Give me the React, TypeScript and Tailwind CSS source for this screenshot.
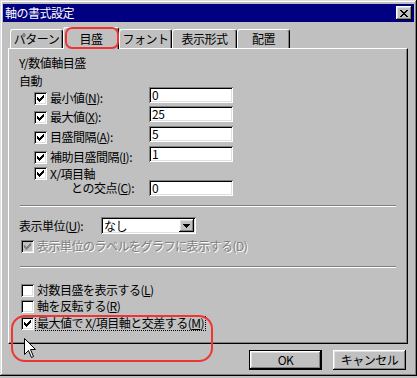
import type {ReactNode} from 'react';

const raised =
    'shadow-[inset_-1px_-1px_0_#000,inset_1px_1px_0_#fff,inset_-2px_-2px_0_#808080,inset_2px_2px_0_#dfdfdf]';
const sunken =
    'shadow-[inset_1px_1px_0_#808080,inset_-1px_-1px_0_#fff,inset_2px_2px_0_#000,inset_-2px_-2px_0_#dfdfdf]';

const CheckBox = ({checked = false, disabled = false}: {checked?: boolean; disabled?: boolean}) => (
    <span
        className={`relative flex h-[13px] w-[13px] shrink-0 items-center justify-center ${sunken} ${
            disabled ? 'bg-[#c0c0c0]' : 'bg-white'
        }`}
    >
        {checked && (
            <svg width="7" height="7" viewBox="0 0 7 7" className="block">
                <path
                    d="M0 2h1v1h1v1h1V3h1V2h1V1h1V0h1v3H6v1H5v1H4v1H3v1H2V6H1V5H0z"
                    fill={disabled ? '#808080' : '#000'}
                />
            </svg>
        )}
    </span>
);

const Field = ({value}: {value: string}) => (
    <div className={`flex h-[16px] w-[84px] shrink-0 items-center bg-white pl-[3px] ${sunken}`}>
        {value}
    </div>
);

const Sep = ({className}: {className: string}) => (
    <div className={`mx-[11px] h-[2px] border-t border-b border-t-[#808080] border-b-white ${className}`} />
);

const ValueRow = ({label, value, className}: {label: ReactNode; value: string; className: string}) => (
    <div className={`ml-[25px] flex items-start ${className}`}>
        <div className="mt-[3px] flex h-[16px] w-[115px] items-center gap-[3px]">
            <CheckBox checked />
            <span>{label}</span>
        </div>
        <Field value={value} />
    </div>
);

const Tab = ({label, width, selected = false}: {label: string; width: string; selected?: boolean}) =>
    selected ? (
        <div
            className={`relative z-10 -mb-px flex h-[22px] items-center justify-center rounded-t-[3px] border-t border-l border-r border-t-white border-l-white border-r-black bg-[#c0c0c0] shadow-[inset_-1px_0_0_#808080] ${width}`}
        >
            {label}
        </div>
    ) : (
        <div
            className={`flex h-[19px] items-center justify-center rounded-t-[3px] border-t border-l border-r border-t-white border-l-white border-r-black shadow-[inset_-1px_0_0_#808080] ${width}`}
        >
            {label}
        </div>
    );

export default function App() {
    return (
        <div className="relative h-[378px] w-[417px] bg-[#c0c0c0] font-['Noto_Sans_CJK_JP','Noto_Sans',sans-serif] text-[12px] leading-none tracking-[-0.5px] text-black">
            <div
                className={`flex h-[376px] flex-col px-[3px] pt-[4px] shadow-[inset_-1px_-1px_0_#000,inset_1px_1px_0_#dfdfdf,inset_-2px_-2px_0_#808080,inset_2px_2px_0_#fff]`}
            >
                {/* title bar */}
                <div className="flex h-[18px] items-center justify-between bg-[#000080] pr-[2px] pl-[2px] text-white">
                    <span>軸の書式設定</span>
                    <div className={`flex h-[14px] w-[16px] items-center justify-center bg-[#c0c0c0] ${raised}`}>
                        <svg width="8" height="7" viewBox="0 0 8 7">
                            <path
                                d="M0 0h2v1h1v1h2V1h1V0h2v1H7v1H6v1H5v1h1v1h1v1h1v1H6V6H5V5H3v1H2v1H0V6h1V5h1V4h1V3H2V2H1V1H0z"
                                fill="#000"
                            />
                        </svg>
                    </div>
                </div>

                {/* tabs */}
                <div className="mt-[5px] ml-[7px] flex h-[21px] items-end">
                    <Tab label="パターン" width="w-[53px]" />
                    <Tab label="目盛" width="w-[56px]" selected />
                    <Tab label="フォント" width="w-[53px]" />
                    <Tab label="表示形式" width="w-[65px]" />
                    <Tab label="配置" width="w-[53px]" />
                </div>

                {/* panel */}
                <div className="ml-[5px] flex h-[296px] w-[400px] flex-col border border-t-white border-r-black border-b-black border-l-white shadow-[inset_-1px_-1px_0_#808080]">
                    <div className="mt-[7px] ml-[10px] flex h-[14px] items-center">Y/数値軸目盛</div>
                    <div className="mt-[4px] ml-[10px] flex h-[14px] items-center">自動</div>

                    <ValueRow
                        className="mt-[-1px] h-[19px]"
                        label={<>最小値(<u>N</u>):</>}
                        value="0"
                    />
                    <ValueRow className="h-[20px]" label={<>最大値(<u>X</u>):</>} value="25" />
                    <ValueRow className="h-[20px]" label={<>目盛間隔(<u>A</u>):</>} value="5" />
                    <ValueRow className="h-[20px]" label={<>補助目盛間隔(<u>I</u>):</>} value="1" />

                    <div className="mt-[1px] ml-[25px] flex h-[13px] items-center gap-[3px]">
                        <CheckBox checked />
                        <span>X/項目軸</span>
                    </div>
                    <div className="ml-[25px] flex h-[16px] items-center">
                        <div className="w-[115px] pl-[37px]">
                            との交点(<u>C</u>):
                        </div>
                        <Field value="0" />
                    </div>

                    <Sep className="mt-[9px]" />

                    <div className="mt-[10px] ml-[10px] flex h-[17px] items-center">
                        <span className="w-[82px]">
                            表示単位(<u>U</u>):
                        </span>
                        <div className={`flex h-[17px] w-[95px] items-center justify-between bg-white pr-[2px] pl-[3px] ${sunken}`}>
                            <span>なし</span>
                            <div className={`flex h-[13px] w-[15px] items-center justify-center bg-[#c0c0c0] ${raised}`}>
                                <svg width="7" height="4" viewBox="0 0 7 4">
                                    <path d="M0 0h7v1H6v1H5v1H4v1H3V3H2V2H1V1H0z" fill="#000" />
                                </svg>
                            </div>
                        </div>
                    </div>

                    <div className="mt-[5px] ml-[12px] flex h-[14px] items-center gap-[3px]">
                        <CheckBox checked disabled />
                        <span className="text-[#808080] [text-shadow:1px_1px_0_#fff]">
                            表示単位のラベルをグラフに表示する(D)
                        </span>
                    </div>

                    <Sep className="mt-[13px]" />

                    <div className="mt-[14px] ml-[12px] flex h-[16px] items-center gap-[3px]">
                        <CheckBox />
                        <span>
                            対数目盛を表示する(<u>L</u>)
                        </span>
                    </div>
                    <div className="ml-[12px] flex h-[16px] items-center gap-[3px]">
                        <CheckBox />
                        <span>
                            軸を反転する(<u>R</u>)
                        </span>
                    </div>
                    <div className="mt-[1px] ml-[12px] flex h-[16px] items-center gap-[1px]">
                        <CheckBox checked />
                        <span className="flex h-[15px] items-center border border-dotted border-black px-[1px]">
                            最大値で X/項目軸と交差する(<u>M</u>)
                        </span>
                    </div>
                </div>

                {/* buttons */}
                <div className="mt-[6px] flex justify-end gap-[11px] pr-[8px]">
                    <div className="h-[20px] w-[73px] border border-black">
                        <div className={`flex h-full w-full items-center justify-center ${raised}`}>OK</div>
                    </div>
                    <div className={`flex h-[20px] w-[73px] items-center justify-center ${raised}`}>キャンセル</div>
                </div>
            </div>

            {/* annotations */}
            <div className="absolute top-[27px] left-[65px] z-20 h-[22px] w-[54px] rounded-[7px] border-2 border-[#f03434]" />
            <div className="absolute top-[315px] left-[11px] z-20 h-[47px] w-[202px] rounded-[14px] border-2 border-[#f03434]" />

            {/* mouse pointer */}
            <svg className="absolute top-[338px] left-[24px] z-30" width="13" height="21" viewBox="0 0 13 21">
                <path
                    d="M0.5 0.5V16.5L4.5 12.5L7.5 19.5L9.5 18.5L6.5 11.5H11.5Z"
                    fill="#fff"
                    stroke="#000"
                    strokeWidth="1"
                />
            </svg>
        </div>
    );
}
